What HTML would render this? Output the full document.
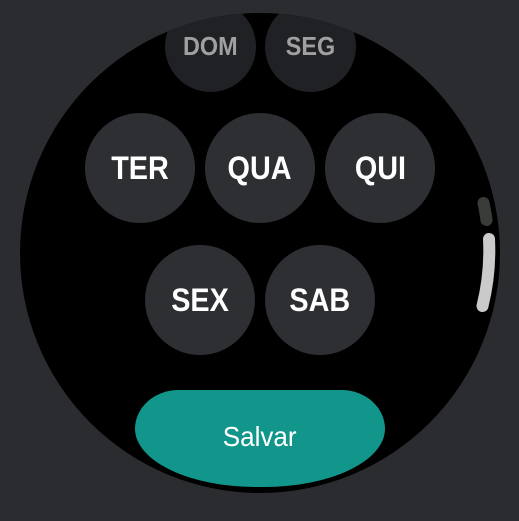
<!DOCTYPE html>
<html><head><style>
html,body{margin:0;padding:0;background:#2b2c30;width:519px;height:521px;overflow:hidden}
.screen{position:absolute;left:20px;top:13px;width:480px;height:480px;border-radius:50%;background:#000;overflow:hidden}
.b{position:absolute;border-radius:50%;background:#2e2f33;color:#fff;font-family:"Liberation Sans",sans-serif;font-weight:bold;display:flex;align-items:center;justify-content:center}
.b span{display:inline-block;transform:scaleX(0.9)}
.big{width:110px;height:110px;font-size:32px}
.sm{width:91px;height:91px;font-size:26px;background:#202124;color:#a0a0a0}
.save{position:absolute;left:115px;top:377px;width:250px;height:97px;background:#12968c;border-radius:45px 45px 125px 125px / 40px 40px 60px 60px;color:#fff;font-family:"Liberation Sans",sans-serif;font-size:28px;text-align:center;line-height:94px}
.save span{display:inline-block;transform:scaleX(0.93)}
</style></head><body>
<div class="screen">
<div class="b sm" style="left:145px;top:-12px"><span>DOM</span></div>
<div class="b sm" style="left:245px;top:-12px"><span>SEG</span></div>
<div class="b big" style="left:65px;top:100px"><span>TER</span></div>
<div class="b big" style="left:185px;top:100px"><span>QUA</span></div>
<div class="b big" style="left:305px;top:100px"><span>QUI</span></div>
<div class="b big" style="left:125px;top:232px"><span>SEX</span></div>
<div class="b big" style="left:245px;top:232px"><span>SAB</span></div>
<div class="save"><span>Salvar</span></div>
</div>
<svg width="519" height="521" style="position:absolute;left:0;top:0">
<path d="M483.5 203 A229 229 0 0 1 486.5 220" stroke="#3a3c3a" stroke-width="12" fill="none" stroke-linecap="round"/>
<path d="M489 239 A229 229 0 0 1 482.5 306" stroke="#cacaca" stroke-width="12" fill="none" stroke-linecap="round"/>
</svg>
</body></html>
